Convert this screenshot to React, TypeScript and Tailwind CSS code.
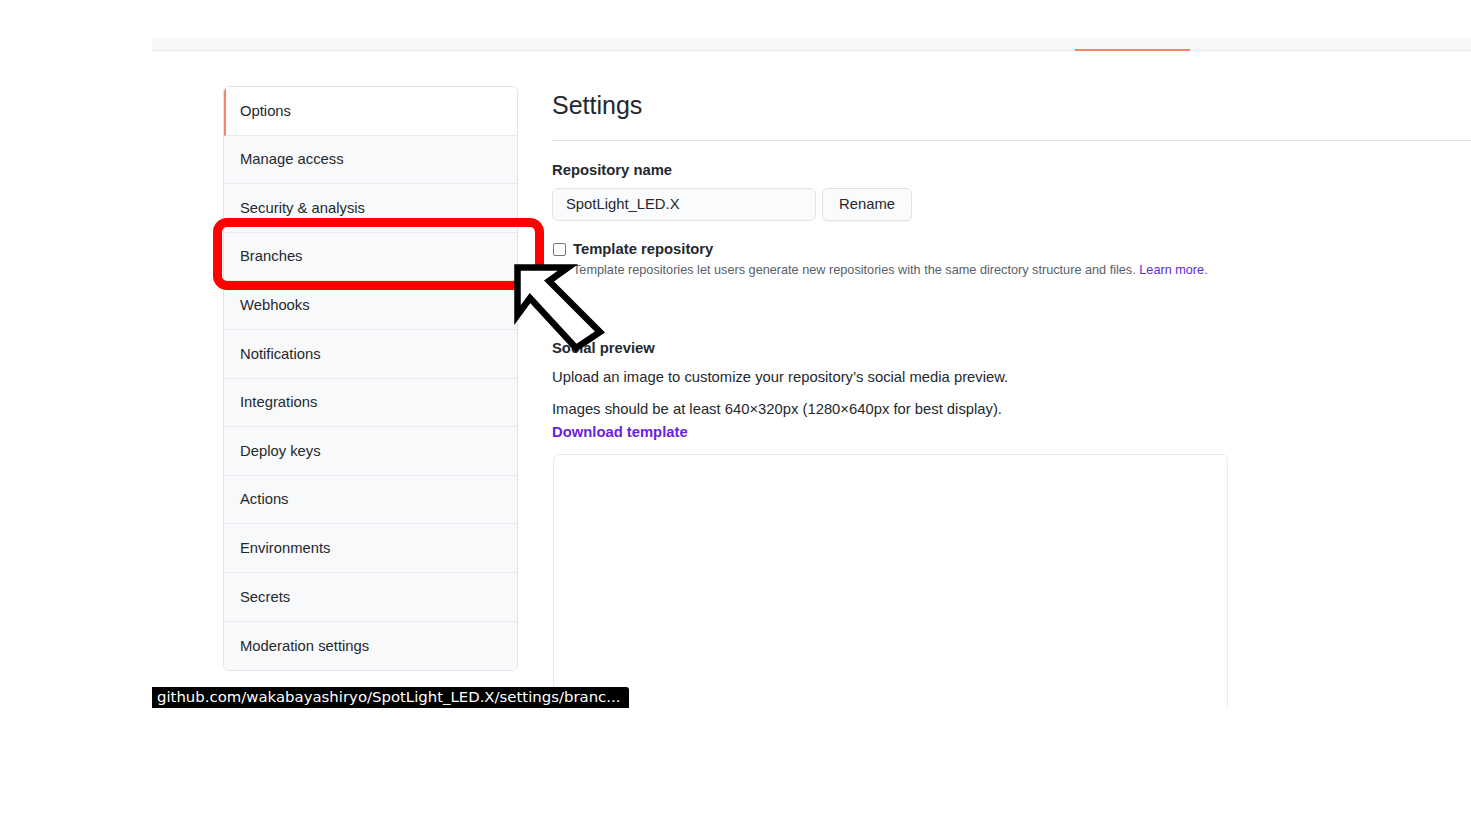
import React from "react";

const menuItems = [
  "Options",
  "Manage access",
  "Security & analysis",
  "Branches",
  "Webhooks",
  "Notifications",
  "Integrations",
  "Deploy keys",
  "Actions",
  "Environments",
  "Secrets",
  "Moderation settings",
];

const SideMenu = () => {
  return (
    <nav className="w-[295px] shrink-0 self-start border border-[#e1e4e8] rounded-[6px] overflow-hidden">
      {menuItems.map((item, i) => (
        <div
          key={item}
          className={`h-[48.6px] flex items-center text-[14.8px] ${
            i === 0 ? "bg-white border-l-[2px] border-l-[#f9826c] pl-[14px]" : "bg-[#f8f9fa] pl-[16px]"
          } ${i < menuItems.length - 1 ? "border-b border-[#e8eaed]" : ""}`}
        >
          {item}
        </div>
      ))}
    </nav>
  );
};

const SettingsForm = () => {
  return (
    <div className="flex-1 min-w-0">
      <h2 className="text-[25px] leading-[38px] pb-[16px] border-b border-[#e1e4e8]">
        Settings
      </h2>

      <p className="mt-[19px] text-[14.8px] leading-[20px] font-bold">Repository name</p>
      <div className="flex gap-[6px] mt-[8px]">
        <div className="w-[264px] h-[33px] flex items-center px-[13px] bg-[#fafbfc] border border-[#e1e4e8] rounded-[6px] text-[14.8px]">
          SpotLight_LED.X
        </div>
        <button className="w-[90px] h-[33px] bg-[#fafbfc] border border-[#dfe2e5] rounded-[6px] text-[14.8px] shadow-[0_1px_0_rgba(27,31,35,0.04)]">
          Rename
        </button>
      </div>

      <div className="flex items-center gap-[7px] mt-[18px] h-[20px]">
        <span className="w-[13px] h-[13px] ml-px border border-[#767676] rounded-[2px] bg-white" />
        <span className="text-[14.8px] font-bold">Template repository</span>
      </div>
      <p className="mt-[2px] pl-[21px] text-[12.7px] leading-[18px] text-[#586069]">
        Template repositories let users generate new repositories with the same directory structure and
        files. <span className="text-[#5b2bd6]">Learn more</span>.
      </p>

      <p className="mt-[59px] text-[14.8px] leading-[20px] font-bold">Social preview</p>
      <p className="mt-[8px] text-[14.8px] leading-[22px]">
        Upload an image to customize your repository’s social media preview.
      </p>
      <p className="mt-[10px] text-[14.8px] leading-[22px]">
        Images should be at least 640×320px (1280×640px for best display).
      </p>
      <p className="mt-px text-[14.8px] leading-[22px] font-bold text-[#6a22dc]">Download template</p>

      <div className="mt-[11px] ml-px w-[675px] h-[320px] border border-[#e8eaed] rounded-[6px] bg-white" />
    </div>
  );
};

const App = () => {
  return (
    <div className="relative w-full h-[828px] bg-white overflow-hidden font-['Liberation_Sans',Arial,sans-serif] text-[#24292e]">
      <div className="pt-[38px] pl-[152px]">
        <div className="relative h-[670px] overflow-hidden">
          <div className="h-[13px] flex items-end pl-[923px] bg-[#f6f8fa] border-b border-[#e8eaed]">
            <div className="w-[115px] h-[2px] bg-[#f9826c] translate-y-px" />
          </div>
          <div className="flex gap-[34px] pt-[35px] pl-[71px]">
            <SideMenu />
            <SettingsForm />
          </div>
          {/* link preview shown by browser */}
          <div className="absolute left-0 bottom-0 h-[21px] w-[477px] flex items-center px-[5px] bg-black text-white rounded-tr-[3px] font-['DejaVu_Sans',sans-serif] text-[14.9px] whitespace-nowrap overflow-hidden">
            github.com/wakabayashiryo/SpotLight_LED.X/settings/branc...
          </div>
        </div>
      </div>

      {/* annotation: highlight box */}
      <div className="absolute left-[213px] top-[218px] w-[331px] h-[72px] border-[9px] border-[#ff0000] rounded-[14px]" />

      {/* annotation: arrow */}
      <svg className="absolute left-[500px] top-[250px]" width="120" height="110" viewBox="500 250 120 110">
        <polygon
          points="517.5,267.5 568,267.5 549,281 600,332 576,348 530,298 517.5,315"
          fill="white"
          stroke="black"
          strokeWidth="6.5"
          strokeLinejoin="miter"
        />
      </svg>
    </div>
  );
};

export default App;
